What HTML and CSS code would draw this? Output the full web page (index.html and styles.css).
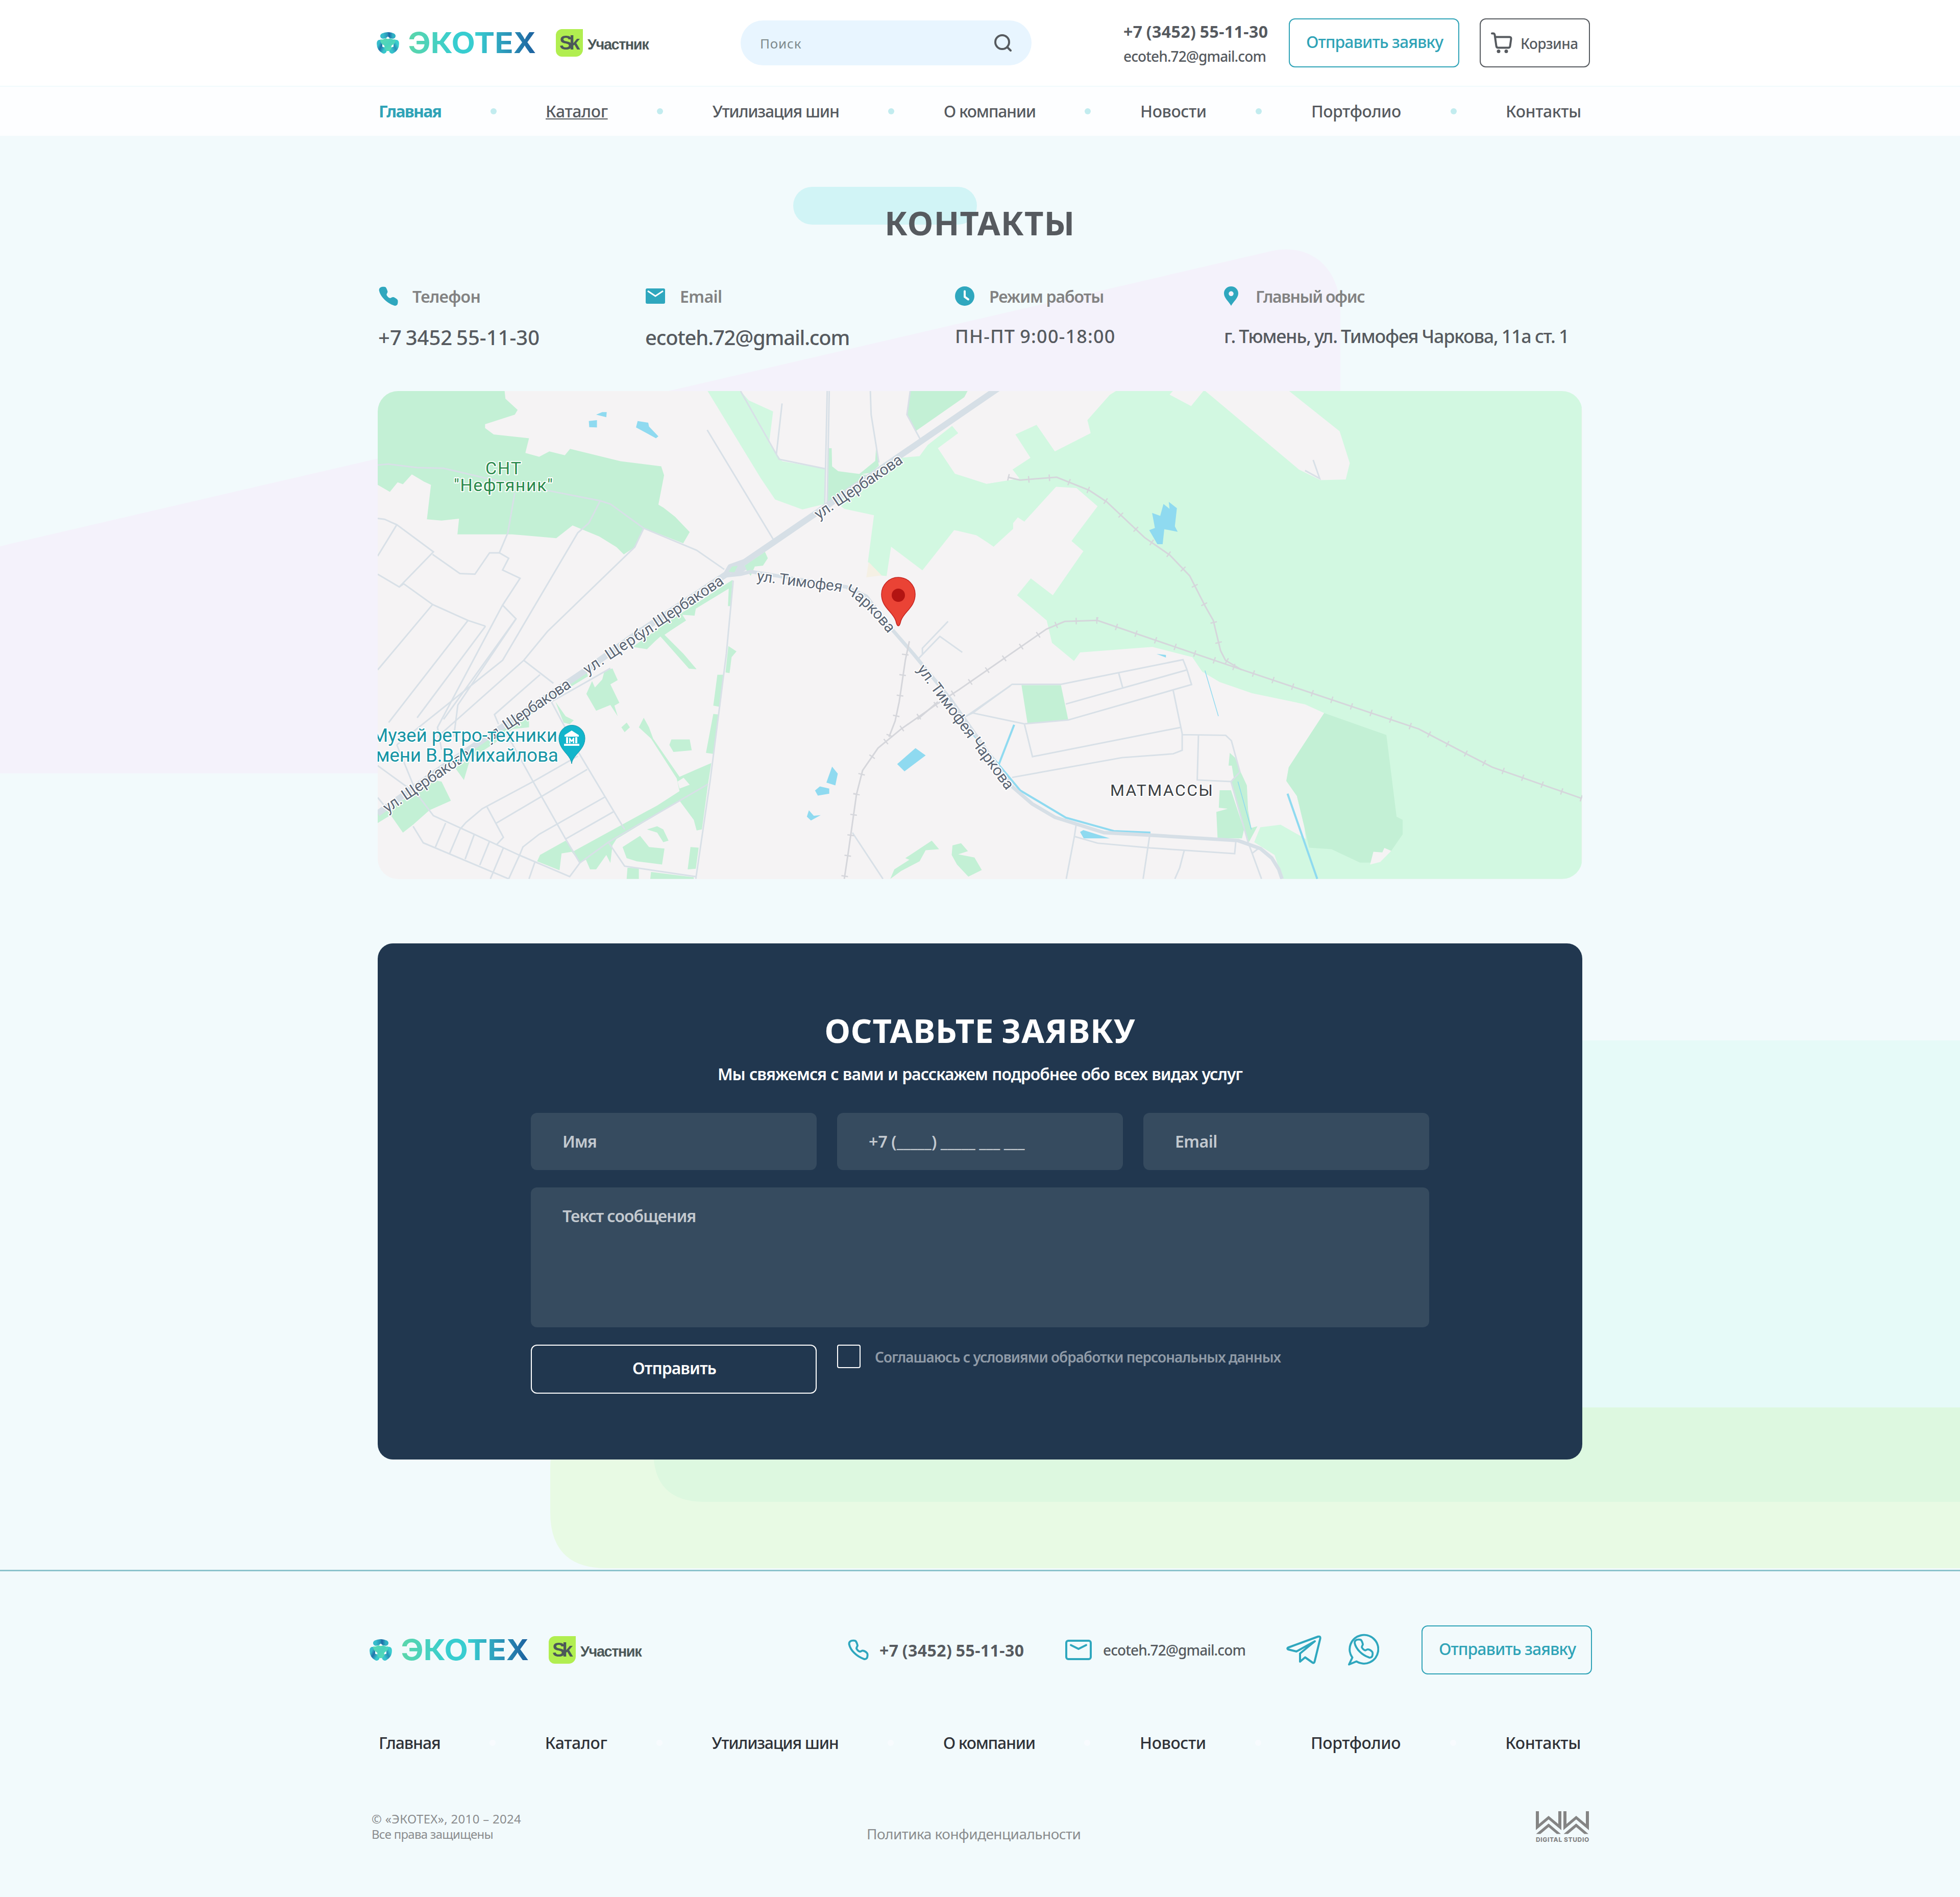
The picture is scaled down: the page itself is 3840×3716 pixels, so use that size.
FILE: index.html
```html
<!DOCTYPE html>
<html lang="ru">
<head>
<meta charset="utf-8">
<title>Экотех — Контакты</title>
<link rel="stylesheet" href="styles.css">
</head>
<body>
<svg class="defs" width="0" height="0" aria-hidden="true">
  <defs>
    <linearGradient id="g-top" x1="0" y1="0" x2="1" y2="0"><stop offset="0" stop-color="#36bccb"/><stop offset=".45" stop-color="#2a94b8"/><stop offset=".62" stop-color="#1d68a6"/><stop offset="1" stop-color="#2fb0c4"/></linearGradient>
    <linearGradient id="g-left" x1="0" y1="0" x2="1" y2="1"><stop offset="0" stop-color="#36bccb"/><stop offset=".4" stop-color="#2172aa"/><stop offset="1" stop-color="#38c8cd"/></linearGradient>
    <linearGradient id="g-right" x1="1" y1="0" x2="0" y2="1"><stop offset="0" stop-color="#3acdcf"/><stop offset=".45" stop-color="#2a90b7"/><stop offset="1" stop-color="#38c4cc"/></linearGradient>
    <linearGradient id="g-mid" x1="0" y1="0" x2="1" y2="1"><stop offset="0" stop-color="#5cdab2"/><stop offset=".5" stop-color="#4bd3bd"/><stop offset="1" stop-color="#5fe0b0"/></linearGradient>
    <symbol id="mark" viewBox="0 0 44 42">
      <g fill="none" stroke-linecap="round" stroke-width="11">
        <path d="M5.8 20.500C5 28 8 33 14 36.500" stroke="url(#g-left)"/>
        <path d="M38.200 20.500C39 28 36 33 30 36.500" stroke="url(#g-right)"/>
        <path d="M12.500 7.500Q22 3.500 31.500 7.500" stroke="url(#g-top)"/>
      </g>
      <path d="M7.500 14Q12 15.500 17 12L22 13L27 12Q32 15.500 36.500 14Q38 21 30 26Q30 33 24 37H20Q14 33 14 26Q6 21 7.500 14Z" fill="url(#g-mid)"/>
      <path d="M22 8.500L25.500 11.500L22 13.500L18.500 11.500ZM11 23.500L15.500 27L15 29.500L11 28.500ZM33 23.500L28.500 27L29 29.500L33 28.500Z" fill="#fff"/>
    </symbol>
    <symbol id="handset" viewBox="-2.500 -2.500 43 43"><path d="M3 1.500C5 0 11-.3 13 1C15 3 16.500 8 17 10C17 12 14.500 14 15 16.500C17 20 19 22 22 22.500C24 22 26 20 28 20.500C31 21 35 24 36.500 26C37.500 28 37 33 36 35C34.500 37 32 38 29.500 37C15 32 3 20 .3 8C-.2 5 .8 2.800 3 1.500Z"/></symbol>
    <symbol id="ww" viewBox="0 0 104 45">
      <path d="M0 0H6V25L25 9L44 25V0H50V37L25 16L0 37ZM25 24L49 44.500H41L25 31L9 44.500H.5Z"/>
      <path d="M54 0H60V25L79 9L98 25V0H104V37L79 16L54 37ZM79 24L103 44.500H95L79 31L63 44.500H54.500Z"/>
    </symbol>
  </defs>
</svg>

<header class="header">
  <div class="topbar">
    <div class="brand brand-top">
      <svg class="mark" width="44" height="42"><use href="#mark"/></svg>
      <span class="name">ЭКОТЕХ</span>
      <span class="sk">Sk</span>
      <span class="member">Участник</span>
    </div>
    <div class="search">
      <span>Поиск</span>
      <svg width="34" height="34" viewBox="0 0 34 34"><circle cx="15.500" cy="15.500" r="13.500"/><path d="M25.500 25.500L32 32"/></svg>
    </div>
    <div class="reach">
      <span class="phone">+7 (3452) 55-11-30</span>
      <span class="mail">ecoteh.72@gmail.com</span>
    </div>
    <a class="btn">Отправить заявку</a>
    <a class="cart">
      <svg width="42" height="42" viewBox="0 0 42 42"><path d="M2 2.500H4.500Q7 2.500 7.500 5.500L10.500 27Q11 30.500 14 30.500H34Q37 30.500 37.500 27.500L39.500 13.500Q40 9.500 36.500 9.500H8.500"/><circle cx="15" cy="37.500" r="3.500"/><circle cx="30" cy="37.500" r="3.500"/></svg>
      <span>Корзина</span>
    </a>
  </div>
  <nav class="nav">
    <a class="active">Главная</a><i></i><a class="under">Каталог</a><i></i><a class="long">Утилизация шин</a><i></i><a class="long">О компании</a><i></i><a>Новости</a><i></i><a>Портфолио</a><i></i><a>Контакты</a>
  </nav>
</header>

<main class="main">
  <svg class="shapes" width="3840" height="2808" viewBox="0 266 3840 2808">
    <path d="M0 1070L2490 492C2570 474 2626 527 2626 610V1515H0Z" fill="#f4f2fb"/>
    <path d="M3840 2038H1385Q1285 2038 1285 2138V2842Q1285 2942 1385 2942H3840Z" fill="#e6faf8"/>
    <path d="M3840 2757H1198Q1078 2757 1078 2877V2962Q1078 3072 1188 3072H3840Z" fill="#e8fae4"/>
    <path d="M3840 2757H1280V2842Q1280 2942 1380 2942H3840Z" fill="#ddf8e0"/>
  </svg>

  <h1 class="title"><span class="pill"></span><span class="title-text">КОНТАКТЫ</span></h1>

  <section class="info">
    <div class="item">
      <div class="label"><svg width="43" height="43" class="solid tel"><use href="#handset"/></svg><span class="l1">Телефон</span></div>
      <div class="value big v1">+7 3452 55-11-30</div>
    </div>
    <div class="item">
      <div class="label"><svg width="38" height="30" viewBox="0 0 38 30" class="solid"><rect width="38" height="30" rx="3"/><path d="M4 5L19 15L34 5" fill="none" stroke="#fff" stroke-width="3"/></svg><span class="l2">Email</span></div>
      <div class="value big v2">ecoteh.72@gmail.com</div>
    </div>
    <div class="item">
      <div class="label"><svg width="38" height="38" viewBox="0 0 38 38" class="solid"><circle cx="19" cy="19" r="19"/><path d="M19 9.500V20.500L26 25.500" fill="none" stroke="#fff" stroke-width="4" stroke-linecap="round"/></svg><span class="l3">Режим работы</span></div>
      <div class="value v3">ПН-ПТ 9:00-18:00</div>
    </div>
    <div class="item">
      <div class="label pin"><svg width="28" height="38" viewBox="0 0 28 38" class="solid"><path d="M14 0C6 0 0 6 0 13.500C0 23 9 29 14 38C19 29 28 23 28 13.500C28 6 22 0 14 0ZM14 9.500A4.800 4.800 0 1 1 14 19.100A4.800 4.800 0 1 1 14 9.500Z" fill-rule="evenodd"/></svg><span class="l4">Главный офис</span></div>
      <div class="value v4">г. Тюмень, ул. Тимофея Чаркова, 11а ст. 1</div>
    </div>
  </section>

  <section class="map">
    <svg width="2360" height="956" viewBox="0 0 2360 956">
      <rect width="2360" height="956" fill="#f5f3f4"/>
      <!-- the drawing grid is wider than tall, strokes keep their own width -->
      <g transform="matrix(.797 0 0 .625 -10.400 -16.250)" class="grid">
        <g class="park">
          <path d="M824 26H905L925 55L985 90L975 190L1007 246L1115 270L1112 380L1057 397L990 366L955 300Z"/>
          <path d="M1425 135L1440 158L1390 205L1432 285L1510 317L1575 305V458L1527 514L1485 475L1430 462L1352 588L1275 514L1264 606L1250 604L1218 562L1233 415L1160 395L1140 375L1300 235L1345 230L1365 195Z"/>
        </g>
        <path d="M1220 562L1252 604L1214 610Z" fill="#f5f0e4"/>
        <g class="wood">
          <path d="M13 26H325L327 50L357 85L350 100L277 130V142L298 162L385 174L376 220L410 232L435 215L473 227L486 207L610 246L710 262L717 290L703 382L716 392L744 420L780 468L764 503L667 455L645 515L618 538L600 515L558 482L492 447L452 487L343 475H209L213 426L170 432L134 428L144 320L127 310L97 287L75 318L62 312L43 342L13 320Z"/>
          <path d="M1322 26H1463L1455 45L1335 152L1315 100Z"/>
          <path d="M1121 205H1129L1130 262L1145 277L1222 290L1130 380L1117 375Z"/>
          <path d="M1238 205L1245 260L1225 282L1195 288L1236 245Z"/>
          <path d="M912 575L965 530L972 550L960 573L940 576L930 605Z"/>
          <path d="M885 618L881 700H874L876 645L795 708L792 730L762 727L771 745L735 775L718 790L765 850L797 898L778 896L708 795L695 810L675 835L640 828L720 755Z"/>
          <path d="M875 825L895 842L883 860L878 910L868 908ZM848 915H864L855 1016L838 1012ZM838 1038L852 1040L838 1163L820 1160Z"/>
          <path d="M570 905L590 895L603 932L585 945L607 1003L595 1012L603 1045L585 1010L550 1028L526 975L540 935L547 955L565 930Z"/>
          <path d="M525 900L530 920L440 990L385 1045V1080L345 1085L300 1130L240 1180L225 1245L205 1210L240 1150L420 990Z"/>
          <path d="M450 1000L475 1045L495 1058L485 1070L470 1065ZM612 1080L625 1065L633 1080L620 1095ZM735 1118H780L785 1152L740 1157L730 1135Z"/>
          <path fill-rule="evenodd" d="M667 1050L680 1080L690 1115L755 1235L800 1210L833 1192L825 1258L810 1400L797 1403L790 1370L755 1310L600 1430L590 1450L585 1505L575 1480L550 1525H535L525 1495L510 1503L490 1470L465 1475L460 1528L405 1500L412 1480L475 1435L495 1468L700 1325L755 1280L748 1240L685 1115L655 1080ZM765 1238L750 1250L755 1272L780 1260Z"/>
          <path d="M150 1245L170 1250L193 1310L140 1340L100 1385L75 1410L45 1355L13 1380V1350L100 1290Z"/>
          <path fill-rule="evenodd" d="M615 1455L658 1420L680 1455L718 1460L712 1510L650 1500L625 1490ZM675 1400L700 1390L715 1400L728 1435L715 1440L700 1410ZM782 1455L802 1457L795 1523L775 1525ZM627 1520L655 1522V1555H625ZM685 1533L790 1550V1555H683Z"/>
          <path d="M1375 1435L1393 1462L1360 1465L1345 1500L1300 1530L1273 1555L1283 1525L1320 1495L1310 1490ZM1426 1450L1447 1443L1464 1468L1440 1478L1480 1488L1498 1527L1465 1548L1437 1510L1424 1480Z"/>
        </g>
        <g class="water">
          <path d="M550 100L565 92L576 92L575 108ZM532 120L552 117V140L533 139ZM652 120L678 125L680 137L703 168L697 174L648 140ZM1335 1145L1360 1168L1308 1218L1290 1195ZM1130 1203L1144 1225L1138 1262L1116 1253ZM1100 1265L1123 1272V1288L1095 1294L1088 1278ZM1073 1340L1085 1357L1102 1355L1078 1372L1068 1360Z"/>
        </g>
        <g class="street">
          <path d="M13 258L40 255L110 266L175 268L275 298L420 335L560 370L585 380L667 456L797 525L865 585"/>
          <path d="M350 345L333 470L312 533L335 550L320 587L363 613L320 697L160 1080L170 1150"/>
          <path d="M320 697L353 740L210 1010L200 1110M560 370L532 440L505 470L320 870L60 1135"/>
          <path d="M13 425L30 428L60 445L150 530L66 640L13 600M60 445L13 543M312 533H288L252 600L215 598L148 538M66 640L77 630L148 695L235 745L278 763M148 695L13 900M235 745L40 1065"/>
          <path d="M667 456L645 515L430 780L372 870L445 942M372 870L160 1110M412 915L300 1040L310 1070"/>
          <path d="M278 763L110 1050M353 740L175 1055M60 1135L110 1290L150 1357L250 1415L360 1480L485 1548L510 1505L580 1440L825 1258"/>
          <path d="M440 1000L505 1155L620 1400M330 1100L395 1250L475 1430L510 1505M505 1170L395 1250L270 1335L230 1378L215 1400"/>
          <path d="M528 1212L305 1380M572 1298L410 1415L370 1455L362 1480M592 1345L475 1430M282 1330L322 1425L305 1448M215 1400L190 1475M180 1380L155 1455M250 1417L228 1493M288 1437L264 1512M322 1458L290 1555M362 1480L335 1555M400 1500L385 1555M100 1390L125 1442L335 1555"/>
          <path d="M585 895L440 1000M823 148L985 490M905 26L1000 240L1115 270M1007 65L993 225M1118 26L1112 380M1123 26L1118 380M1224 26L1226 100L1245 250M1322 26L1314 100L1350 185"/>
          <path d="M887 620L870 850L830 1250L795 1555M795 1548L620 1515L580 1440M13 1200L110 1290M13 1300L45 1350"/>
          <path d="M1342 865L1395 795L1450 845M1352 850V832L1415 748M1180 1410L1255 1555M1460 1045L1568 950"/>
        </g>
        <g transform="translate(1442.600 0)">
          <g class="park">
            <path d="M385 26H525L517 37L570 73L600 26H605L835 272L888 305L950 303L960 252L935 152L811 26H1530V1555H795L775 1480L725 1440L740 1393L790 1385L852 1430L848 1390L830 1295L804 1248L810 1205L897 1035L850 1008L720 973L640 938L597 905L573 860L475 828L380 837L297 845L282 872L228 815L215 745L142 666L176 613L230 666L305 528L276 496L340 387L288 330L238 326L160 435L144 422L85 513L42 478L0 465V290L67 317L148 300L131 272L175 235L138 162L190 132L235 215L323 158L315 117L370 38Z"/>
          </g>
          <g class="wood">
            <path d="M153 948H250L268 1057L168 1069ZM665 1160L678 1175L690 1215L707 1262L710 1340L718 1395L733 1390L712 1440L690 1350L668 1250L675 1240L670 1200H662ZM640 1277H668L700 1400L695 1428H635L632 1345L660 1335L638 1332Z"/>
            <path d="M897 1035L1050 1104L1075 1360L1090 1370V1415L1062 1467L1035 1500L1010 1504H985L915 1462L860 1457L848 1390L830 1295L804 1248L810 1205Z"/>
          </g>
          <path d="M1018 1470L1040 1472L1045 1458L1062 1467L1035 1502L1010 1510Z" fill="#f5f3f4"/>
          <g class="water">
            <path d="M515 373L535 393L530 450L537 467L504 459L500 506H487L467 462L481 455L474 408L494 417L502 380L517 395ZM485 850L508 853V861ZM305 1402L370 1428H306L297 1408Z"/>
          </g>
          <g class="street">
            <path d="M8 1050L33 1035L130 945H250L550 868L560 900L571 946L268 1057L160 1069L33 1035M392 910L402 957M262 1007L560 900M160 1069L180 1172L545 1080M526 965L548 1100V1152L526 1163L400 1175L130 1237M548 1103L655 1105L669 1122L690 1220L668 1250L585 1245L588 1105M668 1250L710 1440L743 1555M287 1388L283 1422L340 1443L470 1458L677 1476L680 1435M283 1422L263 1555M468 1420L452 1555M553 1466L542 1520L530 1555M720 1475L735 1460M870 242L886 300L850 275"/>
          </g>
          <g class="creek">
            <path d="M135 1072L97 1197M20 1080L150 1278L262 1363L380 1405L470 1410M807 1288L880 1555"/>
            <path class="thin" d="M604 902L637 1045M685 1250L718 1400"/>
          </g>
        </g>
        <path class="road main-road" d="M13 1350L190 1190L300 1095L520 905L640 795L870 600L880 578L915 562L1000 488L1540 16"/>
        <path class="road" d="M870 605L905 600L930 592L960 598L1165 640L1215 670L1265 755L1330 850L1420 990L1572 1265L1622 1320L1678 1362L1798 1410L1913 1418L2128 1435L2183 1460L2211 1490L2228 1525L2236 1555"/>
        <path d="M872 598L880 578L912 565L920 585L905 598Z" fill="#d6dfe6"/>
        <path d="M876 592L884 576L898 574L890 594Z" fill="#c3f0d5"/>
        <g>
          <path class="rail" d="M1562 296L1592 305L1682 296L1762 337L1805 373L1898 485L1960 540L2009 605L2047 700L2067 745L2085 840L2097 870L2137 900"/>
          <path class="rail" d="M2973 1303L2753 1205L2692 1165L2572 1085L2132 897L1782 745L1702 748L1657 772L1442 962L1390 1005L1300 1085L1243 1145L1205 1215L1190 1290L1170 1470L1160 1555"/>
          <path class="rail" d="M1320 810L1310 870L1295 1000L1285 1060L1270 1110M1390 1000L1340 1055"/>
          <path class="ties" d="M1562 296L1592 305L1682 296L1762 337L1805 373L1898 485L1960 540L2009 605L2047 700L2067 745L2085 840L2097 870L2137 900"/>
          <path class="ties" d="M2973 1303L2753 1205L2692 1165L2572 1085L2132 897L1782 745L1702 748L1657 772L1442 962L1390 1005L1300 1085L1243 1145L1205 1215L1190 1290L1170 1470L1160 1555"/>
          <path class="ties" d="M1310 850L1295 1000L1285 1060L1270 1110"/>
        </g>
      </g>
      <g class="street-name">
        <text transform="translate(864 252) rotate(-34)" textLength="201">ул. Щербакова</text>
        <text transform="translate(411 556) rotate(-33.500)" textLength="134">ул. Щерб</text>
        <text transform="translate(517 487) rotate(-33.500)">ул.</text>
        <text transform="translate(548 464) rotate(-33.500)" textLength="158">Щербакова</text>
        <text transform="translate(218 689) rotate(-34)" textLength="196">ул. Щербакова</text>
        <text transform="translate(19 827) rotate(-34)" textLength="199">ул. Щербакова</text>
        <path id="bend" d="M742 372L880 390Q916 391 938 410Q966 432 996 470" fill="none" stroke="none"/>
        <text><textPath href="#bend" textLength="292">ул. Тимофея Чаркова</textPath></text>
        <text transform="translate(1056 545) rotate(53.500)" textLength="296">ул. Тимофея Чаркова</text>
      </g>
      <g class="garden">
        <text x="246" y="163" textLength="70">СНТ</text>
        <text x="246" y="196" textLength="194">"Нефтяник"</text>
      </g>
      <g class="museum">
        <text x="352" y="687" textLength="364">Музей ретро-техники</text>
        <text x="354" y="726" textLength="379">имени В.В.Михайлова</text>
      </g>
      <text class="village" x="1435" y="793" textLength="201">МАТМАССЫ</text>
      <path d="M380 730C378 712 355 704 355 680A25.500 25.500 0 0 1 406 680C406 704 382 712 380 730Z" fill="#12b5cb" stroke="#0f96aa" stroke-width="1"/>
      <path d="M366 674L380 665L394 674V677H366ZM369 678H373V690H369ZM387 678H391V690H387ZM365 691H395V695H365ZM375 690V679H377L380 684L383 679H385V690H382.500V685L380 688L377.500 685V690Z" fill="#fff"/>
      <path d="M1020 460C1017 460 1016 454 1015 450C1009 432 987 424 987 398A33 33 0 0 1 1053 398C1053 424 1031 432 1025 450C1024 454 1023 460 1020 460Z" fill="#ea4335" stroke="#c5221f" stroke-width="1.500"/>
      <circle cx="1020" cy="400" r="13" fill="#b31412"/>
    </svg>
  </section>

  <section class="request">
    <h2>ОСТАВЬТЕ ЗАЯВКУ</h2>
    <p class="lead">Мы свяжемся с вами и расскажем подробнее обо всех видах услуг</p>
    <form class="form">
      <div class="field">Имя</div>
      <div class="field mask">+7 (_____) _____ ___ ___</div>
      <div class="field short">Email</div>
      <div class="field area">Текст сообщения</div>
      <div class="send">Отправить</div>
      <div class="agree"><i></i><span>Соглашаюсь с условиями обработки персональных данных</span></div>
    </form>
  </section>
</main>

<footer class="footer">
  <div class="foot-row">
    <div class="brand brand-foot">
      <svg class="mark" width="44" height="42"><use href="#mark"/></svg>
      <span class="name">ЭКОТЕХ</span>
      <span class="sk">Sk</span>
      <span class="member">Участник</span>
    </div>
    <div class="foot-phone"><svg width="42" height="42" class="line"><use href="#handset"/></svg><span class="phone">+7 (3452) 55-11-30</span></div>
    <div class="foot-mail"><svg width="52" height="40" viewBox="0 0 52 40" class="line"><rect x="2" y="2" width="48" height="36" rx="4"/><path d="M11 10.500L26 18L41 10.500" stroke-linecap="round"/></svg><span class="mail">ecoteh.72@gmail.com</span></div>
    <svg class="line tg" width="69" height="58" viewBox="0 0 69 58"><path d="M3.500 24.500L62 3Q67.500 1.500 66.500 7L55.500 52Q54.500 56 51 53.500L37 43.500L27 52V36L56 12L20 32L3.500 28Q1 26 3.500 24.500Z"/></svg>
    <svg class="line wa" width="62" height="64" viewBox="0 0 62 64"><path d="M9.500 47A28 28 0 1 1 17.500 54.500L3 60.500Z"/><use href="#handset" x="11.500" y="9" width="41" height="41"/></svg>
    <a class="btn">Отправить заявку</a>
  </div>
  <nav class="nav foot-nav">
    <a class="main-link">Главная</a><i></i><a>Каталог</a><i></i><a class="long">Утилизация шин</a><i></i><a class="long">О компании</a><i></i><a>Новости</a><i></i><a>Портфолио</a><i></i><a>Контакты</a>
  </nav>
  <div class="legal">
    <div class="copy"><span>© «ЭКОТЕХ», 2010 – 2024</span><span class="rights">Все права защищены</span></div>
    <a class="policy">Политика конфиденциальности</a>
    <div class="studio"><svg width="104" height="45"><use href="#ww"/></svg><span>DIGITAL STUDIO</span></div>
  </div>
</footer>
</body>
</html>
```
FILE: styles.css
```css
* { box-sizing: border-box; }
body {
  margin: 0;
  width: 3840px;
  height: 3716px;
  background: #f2fafc;
  color: #565a5f;
  font-family: "Noto Sans", "Open Sans", sans-serif;
  font-weight: 500;
  white-space: nowrap;
}
h1, h2, p { margin: 0; }
.defs { position: absolute; }
svg { display: block; flex: none; }

/* header */
.topbar {
  display: flex;
  align-items: center;
  height: 168px;
  padding-left: 738px;
  background: #fff;
}
.brand { display: flex; align-items: center; flex: none; }
.brand-top { width: 713px; }
.brand-foot { width: 937px; }
.name {
  width: 307px;
  padding-left: 16px;
  font: 700 56px/60px Inter, sans-serif;
  letter-spacing: 0;
  transform: scaleX(1.075);
  transform-origin: left;
  background: linear-gradient(90deg, #5bd6ab 18px, #37cdd0 102px, #38cdd0 140px, #2b93b8 200px, #1c619f 247px);
  -webkit-background-clip: text;
  background-clip: text;
  color: transparent;
}
.sk {
  position: relative;
  width: 53px;
  height: 54px;
  padding-left: 7px;
  border-radius: 12px 0 14px 12px;
  background: #b1ee50;
  color: #4c5859;
  font: 700 38px/54px "Liberation Sans", Arial, sans-serif;
  letter-spacing: -6px;
}
.member {
  padding: 6px 0 0 9px;
  color: #4c5859;
  font: 700 29px/32px "Liberation Sans", Arial, sans-serif;
  letter-spacing: -1.5px;
}
.search {
  display: flex;
  align-items: center;
  justify-content: space-between;
  flex: none;
  width: 570px;
  height: 88px;
  padding: 0 39px 0 37px;
  border-radius: 44px;
  background: #e8f5ff;
}
.search span { padding: 2px 0 0 1px; color: #7d898b; font-size: 26px; font-weight: 400; letter-spacing: .8px; }
.search svg { fill: none; stroke: #565a5f; stroke-width: 4; stroke-linecap: round; }
.reach {
  display: flex;
  flex-direction: column;
  flex: none;
  width: 504px;
  padding: 4px 0 0 180px;
  line-height: 48px;
}
.phone { font-size: 32px; font-weight: 700; letter-spacing: .45px; word-spacing: -1.5px; }
.mail { font-size: 28px; letter-spacing: -.9px; }
.btn {
  flex: none;
  width: 334px;
  height: 96px;
  padding-left: 2px;
  border: 2px solid #2fa3b7;
  border-radius: 12px;
  color: #2fa3b7;
  font-size: 32px;
  line-height: 88px;
  letter-spacing: -.95px;
  word-spacing: 0;
  text-align: center;
}
.cart {
  display: flex;
  align-items: center;
  flex: none;
  width: 216px;
  height: 96px;
  margin-left: 40px;
  padding-left: 20px;
  border: 2px solid #565a5f;
  border-radius: 12px;
  font-size: 28px;
  letter-spacing: -.6px;
}
.cart svg { fill: none; stroke: #565a5f; stroke-width: 4; stroke-linecap: round; }
.cart circle { fill: #565a5f; stroke: none; }
.cart span { padding: 1px 0 0 16px; }

.nav {
  display: flex;
  align-items: center;
  justify-content: space-between;
  height: 98px;
  padding: 0 742px 0 742px;
  border-top: 2px solid #f1fafc;
  background: #fdfeff;
  font-size: 32px;
  line-height: 44px;
  letter-spacing: -.4px;
}
.nav i { width: 12px; height: 12px; border-radius: 50%; background: #c2ecef; }
.nav .active { color: #2fa3b7; font-weight: 700; letter-spacing: -1.8px; }
.nav .under { text-decoration: underline; text-decoration-thickness: 2px; text-underline-offset: 2px; text-decoration-skip-ink: none; }
.nav .long { letter-spacing: -1.3px; }

/* page body */
.main { position: relative; height: 2809px; padding-top: 130px; }
.shapes { position: absolute; left: 0; top: 0; }
.title, .info, .map, .request { position: relative; }
.title {
  width: 374px;
  margin: 0 auto;
  font-size: 65px;
  font-weight: 700;
  line-height: 80px;
  letter-spacing: 1.1px;
}
.title-text { position: relative; }
.pill {
  position: absolute;
  left: -179px;
  top: -30px;
  width: 360px;
  height: 74px;
  border-radius: 37px;
  background: #d1f4f6;
}
.info {
  display: grid;
  grid-template-columns: 523px 606px 527px 700px;
  padding: 84px 0 0 742px;
}
.label {
  display: flex;
  align-items: center;
  gap: 29px;
  height: 40px;
  color: #828282;
  font-size: 32px;
  font-weight: 600;
}
.label.pin { gap: 34px; }
.solid { fill: #2fa7be; }
.tel { margin: 0 -4px 0 -2px; }
.l1 { letter-spacing: -.7px; }
.l2 { letter-spacing: -.6px; }
.l3 { letter-spacing: -1.1px; word-spacing: -.5px; }
.l4 { letter-spacing: -1.45px; word-spacing: -.5px; }
.value { margin-top: 31px; font-size: 36px; line-height: 56px; }
.value.big { margin: 33px 0 0 -1px; font-size: 40px; }
.v1 { letter-spacing: 0; word-spacing: -2.5px; }
.v2 { letter-spacing: -1.2px; }
.v3 { letter-spacing: 1.2px; word-spacing: -1.5px; }
.v4 { letter-spacing: -1.3px; word-spacing: -.7px; }

/* map */
.map {
  width: 2360px;
  height: 956px;
  margin: 77px auto 0;
  border-radius: 40px;
  overflow: hidden;
}
.park { fill: #d2f8e1; }
.wood { fill: #c3f0d5; }
.water { fill: #8fdaf0; }
.grid path { vector-effect: non-scaling-stroke; }
.street, .creek, .road, .rail, .ties { fill: none; }
.street { stroke: #d8e0e7; stroke-width: 3px; }
.creek { stroke: #8fdaf0; stroke-width: 4px; }
.thin { stroke-width: 1.5px; }
.road { stroke: #d6dfe6; stroke-width: 7px; stroke-linejoin: round; }
.main-road { stroke-width: 12px; }
.rail { stroke: #d5d6db; stroke-width: 3px; }
.ties { stroke: #d5d6db; stroke-width: 13px; stroke-dasharray: 2.5px 38px; }
.map text { font-family: Roboto, sans-serif; font-weight: 400; stroke: #fff; stroke-width: 4px; stroke-linejoin: round; paint-order: stroke; }
.street-name { fill: #5b6675; font-size: 30px; }
.garden { fill: #2b8a4c; font-size: 34px; text-anchor: middle; }
.museum { fill: #1795a5; font-size: 37px; text-anchor: end; }
.map .village { fill: #3c4043; font-size: 32px; }

/* request form */
.request {
  display: flex;
  flex-direction: column;
  align-items: center;
  width: 2360px;
  height: 1011px;
  margin: 126px auto 0;
  padding-top: 130px;
  border-radius: 30px;
  background: #21374f;
  color: #fff;
}
.request h2 { font-size: 65px; font-weight: 700; line-height: 80px; letter-spacing: .8px; word-spacing: -3px; }
.lead { margin-top: 24px; font-size: 32px; font-weight: 650; line-height: 44px; letter-spacing: -1.02px; word-spacing: .9px; }
.form {
  display: grid;
  grid-template-columns: repeat(3, 560px);
  grid-template-rows: 112px 274px 96px;
  gap: 34px 40px;
  margin-top: 54px;
}
.field {
  padding: 34px 0 34px 62px;
  border-radius: 12px;
  background: #364b5f;
  color: #c3c9cf;
  font-size: 32px;
  font-weight: 600;
  line-height: 44px;
  letter-spacing: -1.05px;
}
.mask { letter-spacing: .1px; word-spacing: -1px; }
.short { letter-spacing: -.5px; }
.area { grid-column: 1 / -1; }
.send {
  padding-left: 2px;
  border: 2px solid #fff;
  border-radius: 12px;
  font-size: 32px;
  font-weight: 650;
  line-height: 88px;
  letter-spacing: -1px;
  text-align: center;
}
.agree { display: flex; align-items: center; grid-column: span 2; gap: 28px; height: 46px; color: #909ba7; font-size: 28px; font-weight: 600; letter-spacing: -1px; }
.agree i { width: 46px; height: 46px; border: 2px solid #fff; border-radius: 4px; }
.agree span { padding-top: 2px; }

/* footer */
.footer { height: 641px; padding-top: 106px; border-top: 3px solid #8cc3cc; }
.foot-row { display: flex; align-items: center; height: 96px; padding-left: 724px; }
.foot-phone, .foot-mail { display: flex; align-items: center; flex: none; gap: 20px; }
.foot-phone { width: 426px; }
.foot-mail { width: 433px; gap: 22px; }
.line { fill: none; stroke: #2fa7be; stroke-width: 4; stroke-linejoin: round; }
.tg { margin-right: 51px; }
.wa { margin-right: 83px; }
.foot-nav {
  height: 44px;
  margin-top: 112px;
  padding-right: 743px;
  border: 0;
  background: none;
  color: #2f3238;
}
.foot-nav i { background: #f8fbfe; }
.nav .main-link { letter-spacing: -1.1px; }
.legal {
  display: grid;
  grid-template-columns: 969px 1312px 104px;
  height: 60px;
  margin-top: 112px;
  padding-left: 728px;
  color: #8a8c8e;
  font-weight: 400;
}
.copy { display: flex; flex-direction: column; font-size: 24px; line-height: 30px; letter-spacing: .3px; }
.rights { letter-spacing: -.75px; }
.policy { align-self: end; padding: 0 0 3px 1px; font-size: 28px; line-height: 30px; letter-spacing: -.55px; }
.studio { fill: #848484; color: #848484; }
.studio span { display: block; margin-top: 5px; font: 800 12px/12px Inter, sans-serif; letter-spacing: .6px; }
```
